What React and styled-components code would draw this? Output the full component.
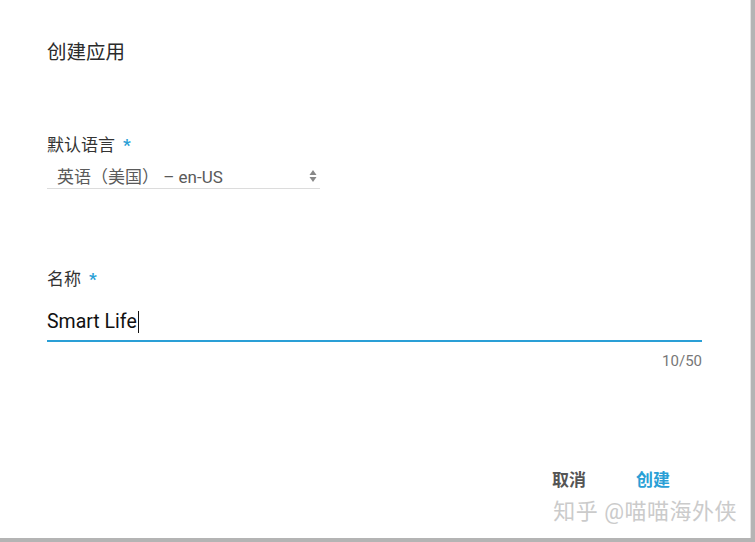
import React from 'react';
import styled, { createGlobalStyle } from 'styled-components';

const Global = createGlobalStyle`
  html, body {
    margin: 0;
    padding: 0;
    background: #b4b4b4;
    font-family: Roboto, "Noto Sans CJK SC", sans-serif;
  }
`;

const Dialog = styled.div`
  position: relative;
  width: 751px;
  height: 538px;
  background: #fff;
  border-right: 1px solid #e2e2e2;
  box-sizing: border-box;
  padding: 0 48px 0 47px;
  display: flex;
  flex-direction: column;
`;

const Title = styled.h2`
  margin: 41px 0 0;
  font-size: 19.5px;
  font-weight: 400;
  line-height: 24px;
  color: #2b2b2b;
`;

const Field = styled.div`
  display: flex;
  flex-direction: column;
  margin-top: ${p => p.top}px;
`;

const Label = styled.label`
  font-size: 17px;
  line-height: 22px;
  color: #333;
  display: flex;
  align-items: center;
  gap: 8px;
`;

const Star = styled.span`
  color: #2a9fd6;
  font-weight: 700;
  font-size: 17px;
`;

const Select = styled.div`
  width: 273px;
  margin-top: 7px;
  height: 26px;
  border-bottom: 1px solid #dcdcdc;
  display: flex;
  align-items: center;
  justify-content: space-between;
  padding-left: 10px;
  box-sizing: border-box;
  font-size: 17px;
  color: #5a5a5a;
`;

const Arrows = styled.svg`
  margin-right: 3px;
`;

const Input = styled.div`
  margin-top: 17px;
  height: 29px;
  font-size: 19.5px;
  color: #111;
  border-bottom: 2px solid #2a9fd6;
  padding-bottom: 4px;
  display: flex;
  align-items: center;
`;

const Caret = styled.span`
  display: inline-block;
  width: 1px;
  height: 22px;
  background: #111;
  margin-left: 1px;
`;

const Counter = styled.div`
  align-self: flex-end;
  margin-top: 10px;
  font-size: 15px;
  color: #777;
`;

const Actions = styled.div`
  margin-top: 96px;
  display: flex;
  justify-content: flex-end;
  gap: 50px;
  padding-right: 32px;
`;

const Button = styled.button`
  border: none;
  background: none;
  padding: 0;
  font-family: inherit;
  font-size: 17px;
  font-weight: 700;
  color: ${p => (p.primary ? '#2a9fd6' : '#555')};
  cursor: pointer;
`;

const Watermark = styled.div`
  position: absolute;
  right: 13px;
  bottom: 13px;
  font-size: 22px;
  color: #cbcbcb;
  letter-spacing: 0.5px;
`;

export default function App() {
  return (
    <>
      <Global />
      <Dialog>
        <Title>创建应用</Title>
        <Field top={69}>
          <Label>默认语言 <Star>*</Star></Label>
          <Select>
            <span>英语（美国） – en-US</span>
            <Arrows width="8" height="16" viewBox="0 0 8 16">
              <path d="M4 2 L7.5 7 L0.5 7 Z" fill="#888" />
              <path d="M4 14 L7.5 9 L0.5 9 Z" fill="#888" />
            </Arrows>
          </Select>
        </Field>
        <Field top={79}>
          <Label>名称 <Star>*</Star></Label>
          <Input>Smart Life<Caret /></Input>
          <Counter>10/50</Counter>
        </Field>
        <Actions>
          <Button>取消</Button>
          <Button primary>创建</Button>
        </Actions>
        <Watermark>知乎 @喵喵海外侠</Watermark>
      </Dialog>
    </>
  );
}
